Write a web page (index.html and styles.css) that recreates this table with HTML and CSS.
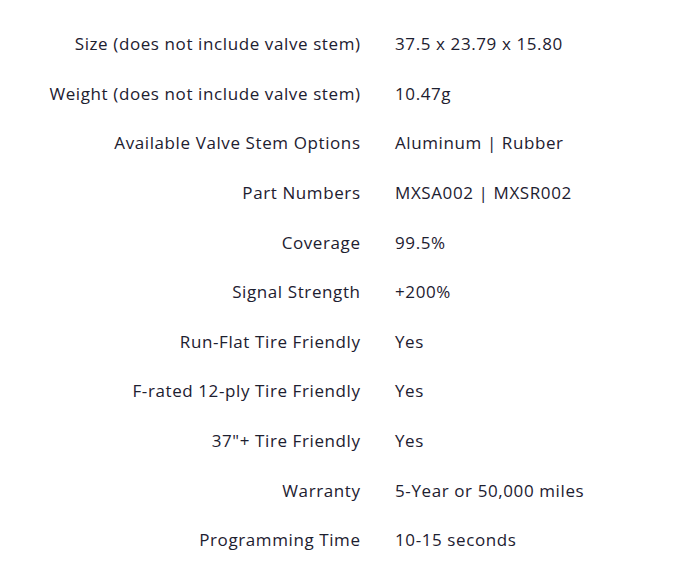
FILE: index.html
```html
<!DOCTYPE html>
<html>
<head>
<meta charset="utf-8">
<link rel="stylesheet" href="styles.css">
</head>
<body>
<div class="specs">
  <div class="label">Size (does not include valve stem)</div><div class="value">37.5 x 23.79 x 15.80</div>
  <div class="label">Weight (does not include valve stem)</div><div class="value">10.47g</div>
  <div class="label">Available Valve Stem Options</div><div class="value">Aluminum | Rubber</div>
  <div class="label">Part Numbers</div><div class="value">MXSA002 | MXSR002</div>
  <div class="label">Coverage</div><div class="value">99.5%</div>
  <div class="label">Signal Strength</div><div class="value">+200%</div>
  <div class="label">Run-Flat Tire Friendly</div><div class="value">Yes</div>
  <div class="label">F-rated 12-ply Tire Friendly</div><div class="value">Yes</div>
  <div class="label">37"+ Tire Friendly</div><div class="value">Yes</div>
  <div class="label">Warranty</div><div class="value">5-Year or 50,000 miles</div>
  <div class="label">Programming Time</div><div class="value">10-15 seconds</div>
</div>
</body>
</html>
```
FILE: styles.css
```css
html, body {
  margin: 0;
  padding: 0;
  background: #ffffff;
}
body {
  font-family: "Open Sans", "Liberation Sans", sans-serif;
  font-size: 17px;
  letter-spacing: 0.6px;
  color: #1d2030;
}
.specs {
  display: grid;
  grid-template-columns: 360px 1fr;
  column-gap: 35px;
  grid-auto-rows: 49.6px;
  align-items: center;
  padding-top: 19px;
}
.label {
  text-align: right;
  margin-right: -0.6px;
}
.value {
  text-align: left;
}
```
